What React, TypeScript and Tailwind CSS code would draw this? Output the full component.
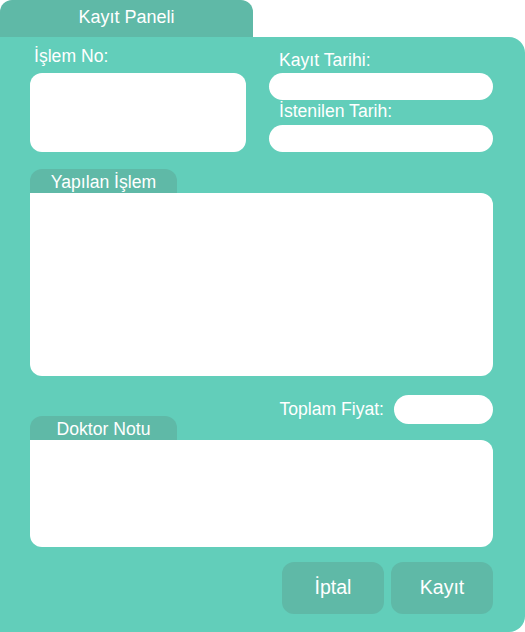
const font = { fontFamily: '"Liberation Sans", Arial, sans-serif' }

function Label({ children, className = "" }: { children: React.ReactNode; className?: string }) {
  return <div className={`text-[17.6px] leading-none text-white ${className}`}>{children}</div>
}

function SectionTab({ title }: { title: string }) {
  return (
    <div className="flex h-[24px] w-[147px] items-center justify-center rounded-t-[12px] bg-[#5fb9a7] pt-[3px] text-[17.6px] leading-none text-white">
      {title}
    </div>
  )
}

export default function App() {
  return (
    <div className="h-[632px] w-[525px] bg-white" style={font}>
      <div className="flex h-[37px] w-[253px] items-center justify-center rounded-t-[12px] bg-[#5fb9a7] pb-[2px] text-[18px] text-white">
        Kayıt Paneli
      </div>
      <div className="flex h-[595px] flex-col rounded-tr-[16px] rounded-br-[16px] bg-[#62ceba] pl-[30px] pr-[32px]">
        <div className="flex gap-[23px]">
          <div className="flex w-[216px] flex-col">
            <div className="flex h-[36px] items-end pb-[7px] pl-[4px]">
              <Label>İşlem No:</Label>
            </div>
            <div className="h-[79px] rounded-[12px] bg-white" />
          </div>
          <div className="flex flex-1 flex-col">
            <div className="flex h-[36px] items-end pb-[3px] pl-[10px]">
              <Label>Kayıt Tarihi:</Label>
            </div>
            <div className="h-[27px] rounded-full bg-white" />
            <div className="flex h-[25px] items-end pb-[4px] pl-[10px]">
              <Label>İstenilen Tarih:</Label>
            </div>
            <div className="h-[27px] rounded-full bg-white" />
          </div>
        </div>

        <div className="mt-[17px]">
          <SectionTab title="Yapılan İşlem" />
          <div className="h-[183px] rounded-[12px] rounded-tl-none bg-white" />
        </div>

        <div className="mt-[19px] flex h-[45px] justify-between">
          <div className="self-end">
            <SectionTab title="Doktor Notu" />
          </div>
          <div className="flex h-[29px] items-center gap-[10px]">
            <Label>Toplam Fiyat:</Label>
            <div className="h-[29px] w-[99px] rounded-full bg-white" />
          </div>
        </div>
        <div className="h-[107px] rounded-[12px] rounded-tl-none bg-white" />

        <div className="mt-[15px] flex justify-end gap-[7px]">
          <button className="h-[52px] w-[102px] rounded-[12px] bg-[#5fb9a7] text-[19.5px] text-white">İptal</button>
          <button className="h-[52px] w-[102px] rounded-[12px] bg-[#5fb9a7] text-[19.5px] text-white">Kayıt</button>
        </div>
      </div>
    </div>
  )
}
